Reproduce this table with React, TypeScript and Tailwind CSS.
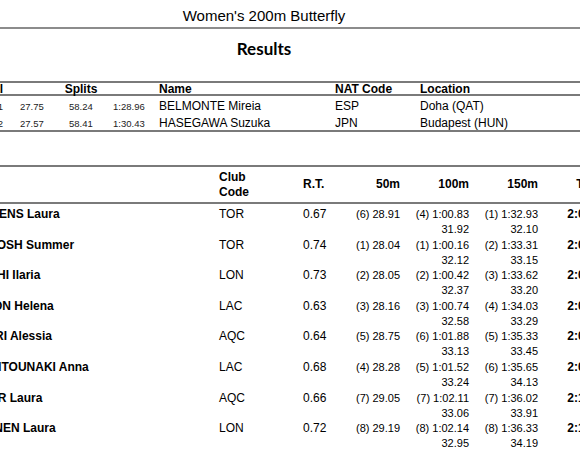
const records = [
  { time: '1:59.61', s1: '27.75', s2: '58.24', s3: '1:28.96', name: 'BELMONTE Mireia', nat: 'ESP', loc: 'Doha (QAT)' },
  { time: '2:00.92', s1: '27.57', s2: '58.41', s3: '1:30.43', name: 'HASEGAWA Suzuka', nat: 'JPN', loc: 'Budapest (HUN)' },
];

const results = [
  { name: 'STEPHENS Laura', club: 'TOR', rt: '0.67', s50: '(6) 28.91', s100: '(4) 1:00.83', l100: '31.92', s150: '(1) 1:32.93', l150: '32.10', time: '2:05.27' },
  { name: 'MCINTOSH Summer', club: 'TOR', rt: '0.74', s50: '(1) 28.04', s100: '(1) 1:00.16', l100: '32.12', s150: '(2) 1:33.31', l150: '33.15', time: '2:05.61' },
  { name: 'BIANCHI Ilaria', club: 'LON', rt: '0.73', s50: '(2) 28.05', s100: '(2) 1:00.42', l100: '32.37', s150: '(3) 1:33.62', l150: '33.20', time: '2:06.08' },
  { name: 'GASSON Helena', club: 'LAC', rt: '0.63', s50: '(3) 28.16', s100: '(3) 1:00.74', l100: '32.58', s150: '(4) 1:34.03', l150: '33.29', time: '2:07.12' },
  { name: 'POLIERI Alessia', club: 'AQC', rt: '0.64', s50: '(5) 28.75', s100: '(6) 1:01.88', l100: '33.13', s150: '(5) 1:35.33', l150: '33.45', time: '2:08.71' },
  { name: 'NTOUNTOUNAKI Anna', club: 'LAC', rt: '0.68', s50: '(4) 28.28', s100: '(5) 1:01.52', l100: '33.24', s150: '(6) 1:35.65', l150: '34.13', time: '2:09.94' },
  { name: 'TAYLOR Laura', club: 'AQC', rt: '0.66', s50: '(7) 29.05', s100: '(7) 1:02.11', l100: '33.06', s150: '(7) 1:36.02', l150: '33.91', time: '2:10.06' },
  { name: 'LAHTINEN Laura', club: 'LON', rt: '0.72', s50: '(8) 29.19', s100: '(8) 1:02.14', l100: '32.95', s150: '(8) 1:36.33', l150: '34.19', time: '2:10.83' },
];

export default function App() {
  return (
    <div className="h-[460px] w-[580px] overflow-hidden bg-white font-['Liberation_Sans',Arial,sans-serif] text-black">
      <div className="h-[27px] w-[528px] pt-[7px] text-center text-[15px] leading-[18px]">Women's 200m Butterfly</div>
      <div className="h-[2px] bg-[#8c8c8c]" />
      <div className="w-[528px] pt-[9px] text-center font-['Lato',sans-serif] text-[17px] font-bold leading-[22px]">Results</div>

      {/* records */}
      <div className="-ml-[57px] mt-[21px] w-[700px] border-y-2 border-[#7a7a7a]">
        <div className="flex h-[13px] items-center border-b-2 border-[#7a7a7a] pt-[2px] text-[12px] font-bold leading-[11px]">
          <div className="w-[60px] text-right">Total</div>
          <div className="w-[156px] text-center">Splits</div>
          <div className="w-[176px]">Name</div>
          <div className="w-[85px]">NAT Code</div>
          <div>Location</div>
        </div>
        {records.map((r) => (
          <div key={r.name} className="flex h-[17px] items-center pt-[4px] leading-[13px]">
            <div className="w-[60px] text-right text-[9.5px] text-[#222]">{r.time}</div>
            <div className="w-[66px] pl-[17px] text-[9.5px] text-[#222]">{r.s1}</div>
            <div className="w-[44px] text-[9.5px] text-[#222]">{r.s2}</div>
            <div className="w-[46px] text-[9.5px] text-[#222]">{r.s3}</div>
            <div className="w-[176px] text-[12px]">{r.name}</div>
            <div className="w-[85px] text-[12px]">{r.nat}</div>
            <div className="text-[12px]">{r.loc}</div>
          </div>
        ))}
      </div>

      {/* results */}
      <div className="-ml-[41px] mt-[33px] w-[700px] border-t-2 border-[#7a7a7a]">
        <div className="flex h-[37px] items-center border-b-2 border-[#7a7a7a] text-[12px] font-bold leading-[15px]">
          <div className="w-[260px]" />
          <div className="w-[84px]">
            Club
            <br />
            Code
          </div>
          <div className="w-[47px]">R.T.</div>
          <div className="w-[50px] text-right">50m</div>
          <div className="w-[69px] text-right">100m</div>
          <div className="w-[69px] text-right">150m</div>
          <div className="w-[70px] pr-[4px] text-right">Time</div>
        </div>
        {results.map((r) => (
          <div key={r.name} className="flex h-[30.6px] pt-[3px] leading-[15px]">
            <div className="w-[260px] text-[12px] font-bold">{r.name}</div>
            <div className="w-[84px] text-[12px]">{r.club}</div>
            <div className="w-[47px] text-[12px]">{r.rt}</div>
            <div className="w-[50px] text-right text-[11px]">{r.s50}</div>
            <div className="flex w-[69px] flex-col text-right text-[11px]">
              <span>{r.s100}</span>
              <span>{r.l100}</span>
            </div>
            <div className="flex w-[69px] flex-col text-right text-[11px]">
              <span>{r.s150}</span>
              <span>{r.l150}</span>
            </div>
            <div className="w-[70px] text-right text-[12px] font-bold">{r.time}</div>
          </div>
        ))}
      </div>
    </div>
  );
}
